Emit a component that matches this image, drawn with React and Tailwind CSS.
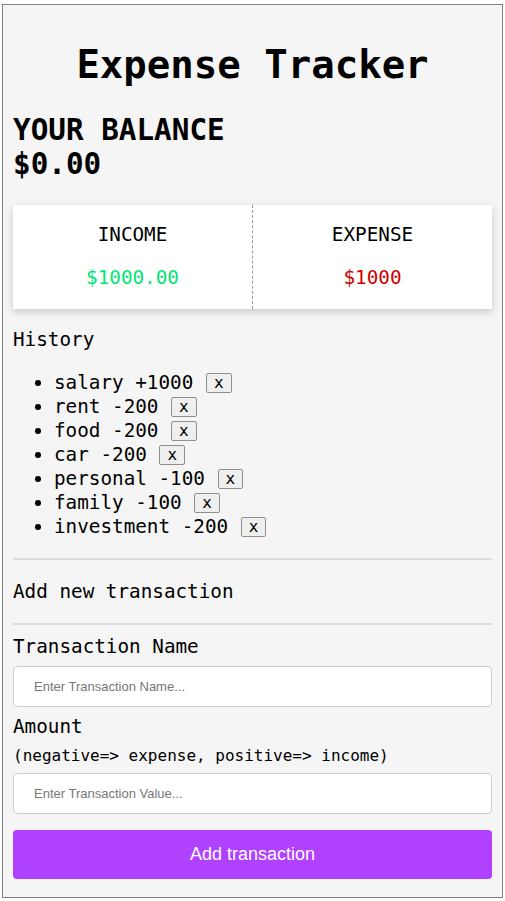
import React, { useState } from 'react';

const initial = [
  { id: 1, name: 'salary', amount: 1000 },
  { id: 2, name: 'rent', amount: -200 },
  { id: 3, name: 'food', amount: -200 },
  { id: 4, name: 'car', amount: -200 },
  { id: 5, name: 'personal', amount: -100 },
  { id: 6, name: 'family', amount: -100 },
  { id: 7, name: 'investment', amount: -200 },
];

const App = () => {
  const [items, setItems] = useState(initial);
  const [name, setName] = useState('');
  const [value, setValue] = useState('');

  const remove = (id) => setItems(items.filter((t) => t.id !== id));

  const addTransaction = () => {
    if (!name || !value) return;
    setItems([...items, { id: Date.now(), name, amount: Number(value) }]);
    setName('');
    setValue('');
  };

  return (
    <div className="pt-[4px] pl-[2px] font-['DejaVu_Sans_Mono',monospace] text-black">
      <div className="w-[501px] h-[894px] border border-[#808080] bg-[#f5f5f5] px-[10px]">
        <h1 className="pt-[34px] text-center text-[39px] font-bold leading-[52px]">Expense Tracker</h1>

        <div className="mt-[22px] text-[29.3px] font-bold leading-[34px]">
          <div>YOUR BALANCE</div>
          <div>$0.00</div>
        </div>

        <div className="mt-[24px] flex h-[104px] bg-white shadow-[0_3px_8px_rgba(0,0,0,0.18)]">
          <div className="flex flex-1 flex-col items-center pt-[18px] text-[19.3px] leading-[24px]">
            <div>INCOME</div>
            <div className="mt-[19px] text-[#00e676]">$1000.00</div>
          </div>
          <div className="border-l border-dashed border-[#999]" />
          <div className="flex flex-1 flex-col items-center pt-[18px] text-[19.3px] leading-[24px]">
            <div>EXPENSE</div>
            <div className="mt-[19px] text-[#d00000]">$1000</div>
          </div>
        </div>

        <div className="mt-[19px] text-[19.3px] leading-[24px]">History</div>

        <ul className="mt-[19px] list-disc pl-[41px] text-[19.3px]">
          {items.map((t) => (
            <li key={t.id} className="h-[24px] leading-[24px]">
              {t.name} {t.amount > 0 ? `+${t.amount}` : t.amount}{' '}
              <button
                onClick={() => remove(t.id)}
                className="relative top-[-1px] ml-[1px] h-[20px] rounded-[2px] border border-[#8f8f8f] bg-[#efefef] px-[7px] align-middle text-[16px] leading-[16px]"
              >
                x
              </button>
            </li>
          ))}
        </ul>

        <hr className="mt-[19px] border-t-2 border-[#dcdcdc]" />
        <div className="mt-[20px] text-[19.3px] leading-[24px]">Add new transaction</div>
        <hr className="mt-[19px] border-t-2 border-[#dcdcdc]" />

        <div className="mt-[10px] text-[19.3px] leading-[24px]">Transaction Name</div>
        <input
          value={name}
          onChange={(e) => setName(e.target.value)}
          placeholder="Enter Transaction Name..."
          className="mt-[7px] block h-[41px] w-full rounded-[4px] border border-[#cfcfcf] bg-white px-[20px] font-['Liberation_Sans',Arial,sans-serif] text-[13px] placeholder:text-[#777]"
        />

        <div className="mt-[8px] text-[19.3px] leading-[24px]">Amount</div>
        <div className="mt-[7px] text-[16px] leading-[20px]">(negative=&gt; expense, positive=&gt; income)</div>
        <input
          value={value}
          onChange={(e) => setValue(e.target.value)}
          placeholder="Enter Transaction Value..."
          className="mt-[7px] block h-[41px] w-full rounded-[4px] border border-[#cfcfcf] bg-white px-[20px] font-['Liberation_Sans',Arial,sans-serif] text-[13px] placeholder:text-[#777]"
        />

        <button
          onClick={addTransaction}
          className="mt-[16px] h-[49px] w-full rounded-[4px] bg-[#af41ff] font-['Liberation_Sans',Arial,sans-serif] text-[18px] text-white"
        >
          Add transaction
        </button>
      </div>
    </div>
  );
};

export default App;
